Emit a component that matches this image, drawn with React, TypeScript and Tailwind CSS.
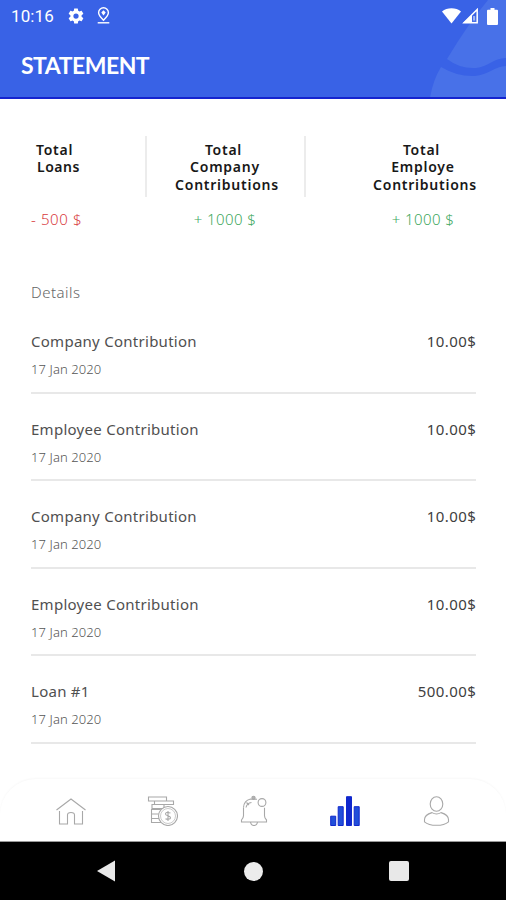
import type { ReactNode } from "react"

interface Total {
  lines: string[]
  amount: string
}

interface Entry {
  title: string
  date: string
  amount: string
}

const company: Total = { lines: ["Total", "Company", "Contributions"], amount: "+ 1000 $" }
const employee: Total = { lines: ["Total", "Employe", "Contributions"], amount: "+ 1000 $" }

const entries: Entry[] = [
  { title: "Company Contribution", date: "17 Jan 2020", amount: "10.00$" },
  { title: "Employee Contribution", date: "17 Jan 2020", amount: "10.00$" },
  { title: "Company Contribution", date: "17 Jan 2020", amount: "10.00$" },
  { title: "Employee Contribution", date: "17 Jan 2020", amount: "10.00$" },
  { title: "Loan #1", date: "17 Jan 2020", amount: "500.00$" },
]

function StatusBar() {
  return (
    <div className="relative flex h-8 items-center pl-[11px] pr-[8px] text-white">
      <span className="w-[43px] whitespace-nowrap font-['Roboto'] text-[17px] leading-8 tracking-[0.1px]">10:16</span>
      <svg className="ml-[13px]" width="18" height="18" viewBox="0 0 24 24" fill="currentColor">
        <path d="M19.43 12.98c.04-.32.07-.64.07-.98s-.03-.66-.07-.98l2.11-1.65c.19-.15.24-.42.12-.64l-2-3.46c-.12-.22-.39-.3-.61-.22l-2.49 1c-.52-.4-1.08-.73-1.69-.98l-.38-2.65A.49.49 0 0 0 14 2h-4c-.25 0-.46.18-.49.42l-.38 2.65c-.61.25-1.17.59-1.69.98l-2.49-1c-.23-.09-.49 0-.61.22l-2 3.46c-.13.22-.07.49.12.64l2.11 1.65c-.04.32-.07.65-.07.98s.03.66.07.98l-2.11 1.65c-.19.15-.24.42-.12.64l2 3.46c.12.22.39.3.61.22l2.49-1c.52.4 1.08.73 1.69.98l.38 2.65c.03.24.24.42.49.42h4c.25 0 .46-.18.49-.42l.38-2.65c.61-.25 1.17-.59 1.69-.98l2.49 1c.23.09.49 0 .61-.22l2-3.46c.12-.22.07-.49-.12-.64l-2.11-1.65zM12 15.5a3.5 3.5 0 1 1 0-7 3.5 3.5 0 0 1 0 7z" />
      </svg>
      <svg className="ml-[12px] mt-[-1px]" width="13" height="17" viewBox="0 0 13 17" fill="none" stroke="currentColor" strokeWidth="1.4">
        <path d="M6.5 13.200C3.500 10.200 1.600 8.200 1.600 5.700a4.900 4.900 0 0 1 9.800 0c0 2.500-1.900 4.500-4.900 7.500z" />
        <path d="M6.5 3.200l2.200 2.400-2.200 3-2.200-3z" fill="currentColor" stroke="none" />
        <path d="M.7 15.800h11.600" />
      </svg>
      <div className="ml-auto flex items-center">
        <svg width="19" height="16" viewBox="0 0 19 16" fill="currentColor">
          <path d="M0 3.600C5-.8 14-.8 19 3.600L9.500 15.500z" />
        </svg>
        <svg className="ml-[1px]" width="17" height="16" viewBox="0 0 17 16">
          <path d="M15.200 1.500v13.200H2z" fill="none" stroke="white" strokeWidth="1.5" />
          <path d="M10 6.500V15H1z" fill="white" />
          <path d="M12 8v4.500" stroke="white" strokeWidth="1" />
        </svg>
        <svg className="ml-[8px]" width="11" height="17" viewBox="0 0 11 17" fill="currentColor">
          <path d="M3.500 0h4v1.800H10q1 0 1 1V16q0 1-1 1H1q-1 0-1-1V2.800q0-1 1-1h2.500z" />
        </svg>
      </div>
    </div>
  )
}

function Header() {
  return (
    <header className="relative h-[99px] overflow-hidden border-b-2 border-[#1524cf] bg-[#3962e6]">
      <svg className="absolute right-0 top-0" width="80" height="98" viewBox="0 0 80 98" fill="#4871e8">
        <path d="M80 0H62Q42 24 21 59Q34 69 50 68C62 67 67 58 80 58z" />
        <path d="M15 67Q32 77 49 76C62 75 69 66 80 66V98H4Q7 80 15 67z" />
      </svg>
      <StatusBar />
      <h1 className="relative pl-[21px] font-['Lato'] text-[23px] font-bold leading-[67px] tracking-[-0.5px] text-white">
        STATEMENT
      </h1>
    </header>
  )
}

function TotalColumn({ total }: { total: Total }) {
  return (
    <div className="flex w-[110px] flex-col items-center whitespace-nowrap">
      <div className="h-[69px] pt-[5px] text-center text-[14px] font-semibold leading-[17.4px] tracking-[0.75px] text-[#181818]">
        {total.lines.map((line) => (
          <div key={line} className="first:pr-[7px] nth-[2]:pr-[4px]">
            {line}
          </div>
        ))}
      </div>
      <div className="pr-[4px] text-[15px] font-light leading-[28px] tracking-[0.4px] text-[#3ca75c]">{total.amount}</div>
    </div>
  )
}

function Totals() {
  return (
    <section className="flex h-[138px] pl-[31px] pt-[37px]">
      <div className="w-[114px] whitespace-nowrap">
        <div className="h-[69px] pl-[5px] pt-[5px] text-[14px] font-semibold leading-[17.4px] tracking-[0.75px] text-[#181818]">
          <div>Total</div>
          <div className="pl-[1px] tracking-[0.5px]">Loans</div>
        </div>
        <div className="text-[15px] font-light leading-[28px] tracking-[0.6px] text-[#d83a40]">- 500 $</div>
      </div>
      <div className="h-[61px] w-[2px] bg-[#ececec]" />
      <div className="ml-[25px]">
        <TotalColumn total={company} />
      </div>
      <div className="ml-[22px] h-[61px] w-[2px] bg-[#ececec]" />
      <div className="ml-[64px]">
        <TotalColumn total={employee} />
      </div>
    </section>
  )
}

function EntryRow({ entry }: { entry: Entry }) {
  return (
    <li className="h-[87.5px] border-b-2 border-[#e8e8e8]">
      <div className="flex justify-between pt-[23px] text-[15px] leading-[24px] text-[#505050]">
        <span className="tracking-[0.27px]">{entry.title}</span>
        <span className="mr-[-0.3px] tracking-[0.45px] text-[#404040]">{entry.amount}</span>
      </div>
      <div className="pt-[4px] text-[13px] font-light leading-[24px] tracking-[0.1px] text-[#555]">{entry.date}</div>
    </li>
  )
}

function NavIcon({ children }: { children: ReactNode }) {
  return (
    <svg width="32" height="32" viewBox="0 0 32 32" fill="none" stroke="#a8a8a8" strokeWidth="1.1">
      {children}
    </svg>
  )
}

function TabBar() {
  return (
    <nav className="flex h-[63px] items-center justify-between rounded-t-[36px] border-b border-[#999] bg-white pl-[55px] pr-[54px] shadow-[0_-1px_2px_rgba(0,0,0,0.03)]">
      <NavIcon>
        <path d="M1.500 16L16 5l14.500 11" />
        <path d="M4.500 17v13h8v-9q0-2.500 3.500-2.500t3.500 2.500v9h8v-13" />
      </NavIcon>
      <NavIcon>
        <path d="M2.500 3h18v4h-18zM8.500 7h19v3.500h-19zM6 10.500h12v4H6zM5.500 15.500h9V20h-9zM5.500 20h8.500v4.500H5.500zM5.500 24.500H15v4H5.500z" />
        <circle cx="22" cy="22" r="9.500" fill="white" />
        <circle cx="22" cy="22" r="7.500" strokeWidth=".6" />
        <path d="M24.500 19q-5-1.500-5 1c0 2.300 5 1.200 5 3.700 0 2.300-5 1.200-5 1.200M22 17v10" />
      </NavIcon>
      <NavIcon>
        <path d="M5.500 13.500v8.300q0 2-2 4.200V28h25v-2q-2-2-2-4.200v-8" />
        <path d="M5.500 13.500Q6 6.500 12.500 5l6.500.3M8 13.500Q9 9 13.500 8.500M8.500 8.500l2.500 2.500" />
        <circle cx="15.500" cy="3.800" r="1.600" fill="#b3b3b3" />
        <circle cx="24" cy="8.500" r="3.900" />
        <path d="M12.500 28q.5 3.500 3.500 3.500t3.500-3.500" />
      </NavIcon>
      <svg width="32" height="32" viewBox="0 0 32 32" fill="#214fd9" stroke="#1028cd" strokeWidth="1">
        <path d="M1.700 22.200h5v9.300h-5z" />
        <path d="M9.200 12.700h5v18.800h-5z" />
        <path d="M17.500 2.700h5v28.800h-5z" fill="#1028cd" />
        <path d="M25.200 12.700h5v18.800h-5z" />
      </svg>
      <NavIcon>
        <ellipse cx="16.500" cy="10" rx="6.300" ry="7.300" />
        <path d="M12 18.600Q4.500 20.800 4.500 25.600v2.200q4 3.500 12 3.500t12-3.500v-2.200q0-4.800-7.500-7Q16.500 21.300 12 18.600z" />
      </NavIcon>
    </nav>
  )
}

function SystemBar() {
  return (
    <div className="flex h-[58px] items-center bg-black pl-[97px] text-[#e8e8e8]">
      <svg width="18" height="22" viewBox="0 0 18 22" fill="currentColor">
        <path d="M18 .5v21L0 11z" />
      </svg>
      <div className="ml-[129px] size-[19px] rounded-full bg-[#ececec]" />
      <div className="ml-[126px] size-[20px] rounded-[2px] bg-[#e8e8e8]" />
    </div>
  )
}

export default function App() {
  return (
    <div className="flex h-[900px] w-[506px] flex-col overflow-hidden bg-white font-['Noto_Sans',sans-serif]">
      <Header />
      <Totals />
      <main className="flex-1 px-[31px]">
        <h2 className="pb-[1px] pt-[42px] text-[15px] font-light leading-[26px] tracking-[0.5px] text-[#666]">Details</h2>
        <ul className="w-[445px]">
          {entries.map((entry, i) => (
            <EntryRow key={i} entry={entry} />
          ))}
        </ul>
      </main>
      <TabBar />
      <SystemBar />
    </div>
  )
}
